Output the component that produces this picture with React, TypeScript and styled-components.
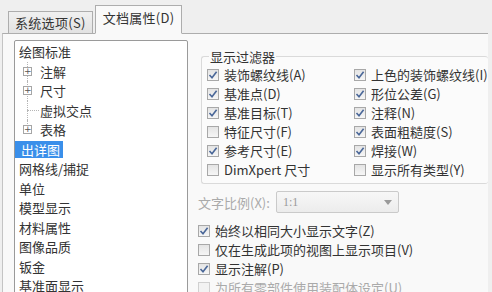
import React, {FC} from 'react';
import styled, {createGlobalStyle} from 'styled-components';

const GlobalStyle = createGlobalStyle`
  html, body {
    margin: 0;
    padding: 0;
    background: #efefef;
  }
  body {
    font-family: "Noto Sans CJK SC", "Noto Sans", sans-serif;
    font-size: 13px;
    color: #333;
  }
`;

type TreeItem = {label: string; child?: 'plus' | 'leaf'; last?: boolean; selected?: boolean};

const tree: TreeItem[] = [
    {label: '绘图标准'},
    {label: '注解', child: 'plus'},
    {label: '尺寸', child: 'plus'},
    {label: '虚拟交点', child: 'leaf'},
    {label: '表格', child: 'plus', last: true},
    {label: '出详图', selected: true},
    {label: '网格线/捕捉'},
    {label: '单位'},
    {label: '模型显示'},
    {label: '材料属性'},
    {label: '图像品质'},
    {label: '钣金'},
    {label: '基准面显示'},
];

const filterLeft: [string, boolean][] = [
    ['装饰螺纹线(A)', true],
    ['基准点(D)', true],
    ['基准目标(T)', true],
    ['特征尺寸(F)', false],
    ['参考尺寸(E)', true],
    ['DimXpert 尺寸', false],
];

const filterRight: [string, boolean][] = [
    ['上色的装饰螺纹线(I)', true],
    ['形位公差(G)', true],
    ['注释(N)', true],
    ['表面粗糙度(S)', true],
    ['焊接(W)', true],
    ['显示所有类型(Y)', false],
];

const options: [string, boolean, boolean][] = [
    ['始终以相同大小显示文字(Z)', true, false],
    ['仅在生成此项的视图上显示项目(V)', false, false],
    ['显示注解(P)', true, false],
    ['为所有零部件使用装配体设定(U)', false, true],
];

const Check: FC<{label: string; checked: boolean; disabled?: boolean}> = ({label, checked, disabled}) => (
    <CheckRow $disabled={disabled}>
        <Box $disabled={disabled}>
            {checked && (
                <svg width="10" height="10" viewBox="0 0 10 10">
                    <polyline points="1.5,5 4,7.8 8.6,1.8" fill="none" stroke="#4a6798" strokeWidth="1.6"/>
                </svg>
            )}
        </Box>
        <span>{label}</span>
    </CheckRow>
);

const App: FC = () => {
    return (
        <Screen>
            <GlobalStyle/>
            <TabStrip>
                <Tab>系统选项(S)</Tab>
                <Tab $active>文档属性(D)</Tab>
            </TabStrip>
            <TabPage>
                <TreeBox>
                    {tree.map(item => (
                        <TreeRow key={item.label}>
                            {item.child && (
                                <Gutter $last={item.last}>
                                    {item.child === 'plus' ? <PlusBox>+</PlusBox> : <Dash/>}
                                </Gutter>
                            )}
                            <TreeLabel $selected={item.selected}>{item.label}</TreeLabel>
                        </TreeRow>
                    ))}
                </TreeBox>
                <RightPane>
                    <FilterGroup>
                        <Legend>显示过滤器</Legend>
                        <FilterGrid>
                            <Column>
                                {filterLeft.map(([l, c]) => <Check key={l} label={l} checked={c}/>)}
                            </Column>
                            <Column>
                                {filterRight.map(([l, c]) => <Check key={l} label={l} checked={c}/>)}
                            </Column>
                        </FilterGrid>
                    </FilterGroup>
                    <ScaleRow>
                        <ScaleLabel>文字比例(X):</ScaleLabel>
                        <Select>
                            <span>1:1</span>
                            <svg width="8" height="5" viewBox="0 0 8 5">
                                <polygon points="0,0 8,0 4,5" fill="#9a9a9a"/>
                            </svg>
                        </Select>
                    </ScaleRow>
                    <Column>
                        {options.map(([l, c, d]) => <Check key={l} label={l} checked={c} disabled={d}/>)}
                    </Column>
                </RightPane>
            </TabPage>
        </Screen>
    );
};

const Screen = styled.div`
  width: 492px;
  height: 292px;
  overflow: hidden;
  padding-left: 2px;
  box-sizing: border-box;
`

const TabStrip = styled.div`
  display: flex;
  align-items: flex-end;
  height: 33px;
  padding-left: 6px;
  position: relative;
  z-index: 1;
`

const Tab = styled.div<{$active?: boolean}>`
  box-sizing: border-box;
  height: ${p => p.$active ? '29px' : '23px'};
  padding: ${p => p.$active ? '0 7px 4px 7px' : '0 6px'};
  display: flex;
  align-items: center;
  background: ${p => p.$active ? '#f9f9f9' : 'linear-gradient(#f0f0f0, #e2e2e2)'};
  border: 1px solid #adadad;
  border-bottom: ${p => p.$active ? '1px solid #f9f9f9' : '1px solid #adadad'};
  margin-bottom: -1px;
  margin-left: ${p => p.$active ? '2px' : '0'};
  color: #333;
  letter-spacing: 0.3px;
  white-space: nowrap;
`

const TabPage = styled.div`
  display: flex;
  align-items: flex-start;
  width: 486px;
  height: 270px;
  box-sizing: border-box;
  background: #f9f9f9;
  border-top: 1px solid #adadad;
  border-left: 1px solid #c4c4c4;
  padding: 6px 0 0 11px;
`

const TreeBox = styled.div`
  width: 174px;
  height: 270px;
  flex-shrink: 0;
  box-sizing: border-box;
  background: #fff;
  border: 1px solid #9a9a9a;
  border-radius: 2px;
  padding: 1px 0 0 3px;
`

const TreeRow = styled.div`
  height: 19.5px;
  display: flex;
  align-items: center;
  white-space: nowrap;
`

const Gutter = styled.div<{$last?: boolean}>`
  position: relative;
  width: 16px;
  height: 100%;
  margin-left: 5px;
  display: flex;
  align-items: center;
  &::before {
    content: '';
    position: absolute;
    left: 4px;
    top: 0;
    height: ${p => p.$last ? '50%' : '100%'};
    border-left: 1px dotted #b5b5b5;
  }
`

const PlusBox = styled.span`
  position: relative;
  width: 9px;
  height: 9px;
  box-sizing: border-box;
  border: 1px solid #a6a6a6;
  background: #fff;
  color: #555;
  font-size: 9px;
  line-height: 7px;
  text-align: center;
  font-family: "DejaVu Sans", sans-serif;
`

const Dash = styled.span`
  position: relative;
  margin-left: 4px;
  width: 12px;
  border-top: 1px dotted #b5b5b5;
`

const TreeLabel = styled.span<{$selected?: boolean}>`
  line-height: 17px;
  color: ${p => p.$selected ? '#fff' : '#333'};
  background: ${p => p.$selected ? '#3a8fea' : 'transparent'};
  margin-left: ${p => p.$selected ? '-3px' : '0'};
  padding-left: ${p => p.$selected ? '6px' : '1px'};
  padding-right: 3px;
`

const RightPane = styled.div`
  display: flex;
  flex-direction: column;
  margin-left: 10px;
  flex: 1;
`

const FilterGroup = styled.fieldset`
  margin: 8px 0 0 3px;
  padding: 0 0 4px 5px;
  border: 1px solid #dadada;
  border-radius: 3px;
  border-right: none;
  background: #fbfbfb;
`

const Legend = styled.legend`
  padding: 0 1px;
  margin-left: 2px;
  line-height: 17px;
  color: #333;
`

const FilterGrid = styled.div`
  display: grid;
  grid-template-columns: 147px 1fr;
`

const Column = styled.div`
  display: flex;
  flex-direction: column;
`

const CheckRow = styled.label<{$disabled?: boolean}>`
  height: 19px;
  display: flex;
  align-items: center;
  gap: 5px;
  white-space: nowrap;
  color: ${p => p.$disabled ? '#aaa' : '#333'};
`

const Box = styled.span<{$disabled?: boolean}>`
  width: 12px;
  height: 12px;
  flex-shrink: 0;
  box-sizing: border-box;
  border: 1px solid ${p => p.$disabled ? '#d0d0d0' : '#a8a8a8'};
  background: ${p => p.$disabled ? '#f2f2f2' : 'linear-gradient(#e4e4e4, #f6f6f6)'};
  display: flex;
  align-items: center;
  justify-content: center;
`

const ScaleRow = styled.div`
  display: flex;
  align-items: center;
  margin-top: 7px;
  margin-bottom: 8px;
  height: 22px;
`

const ScaleLabel = styled.span`
  width: 78px;
  color: #aaa;
  white-space: nowrap;
`

const Select = styled.div`
  width: 123px;
  height: 22px;
  box-sizing: border-box;
  border: 1px solid #cacaca;
  border-radius: 2px;
  background: linear-gradient(#f7f7f7, #ececec);
  display: flex;
  align-items: center;
  justify-content: space-between;
  padding: 0 6px 0 6px;
  color: #9a9a9a;
  font-family: "Liberation Serif", serif;
  font-size: 12px;
`

export default App;
